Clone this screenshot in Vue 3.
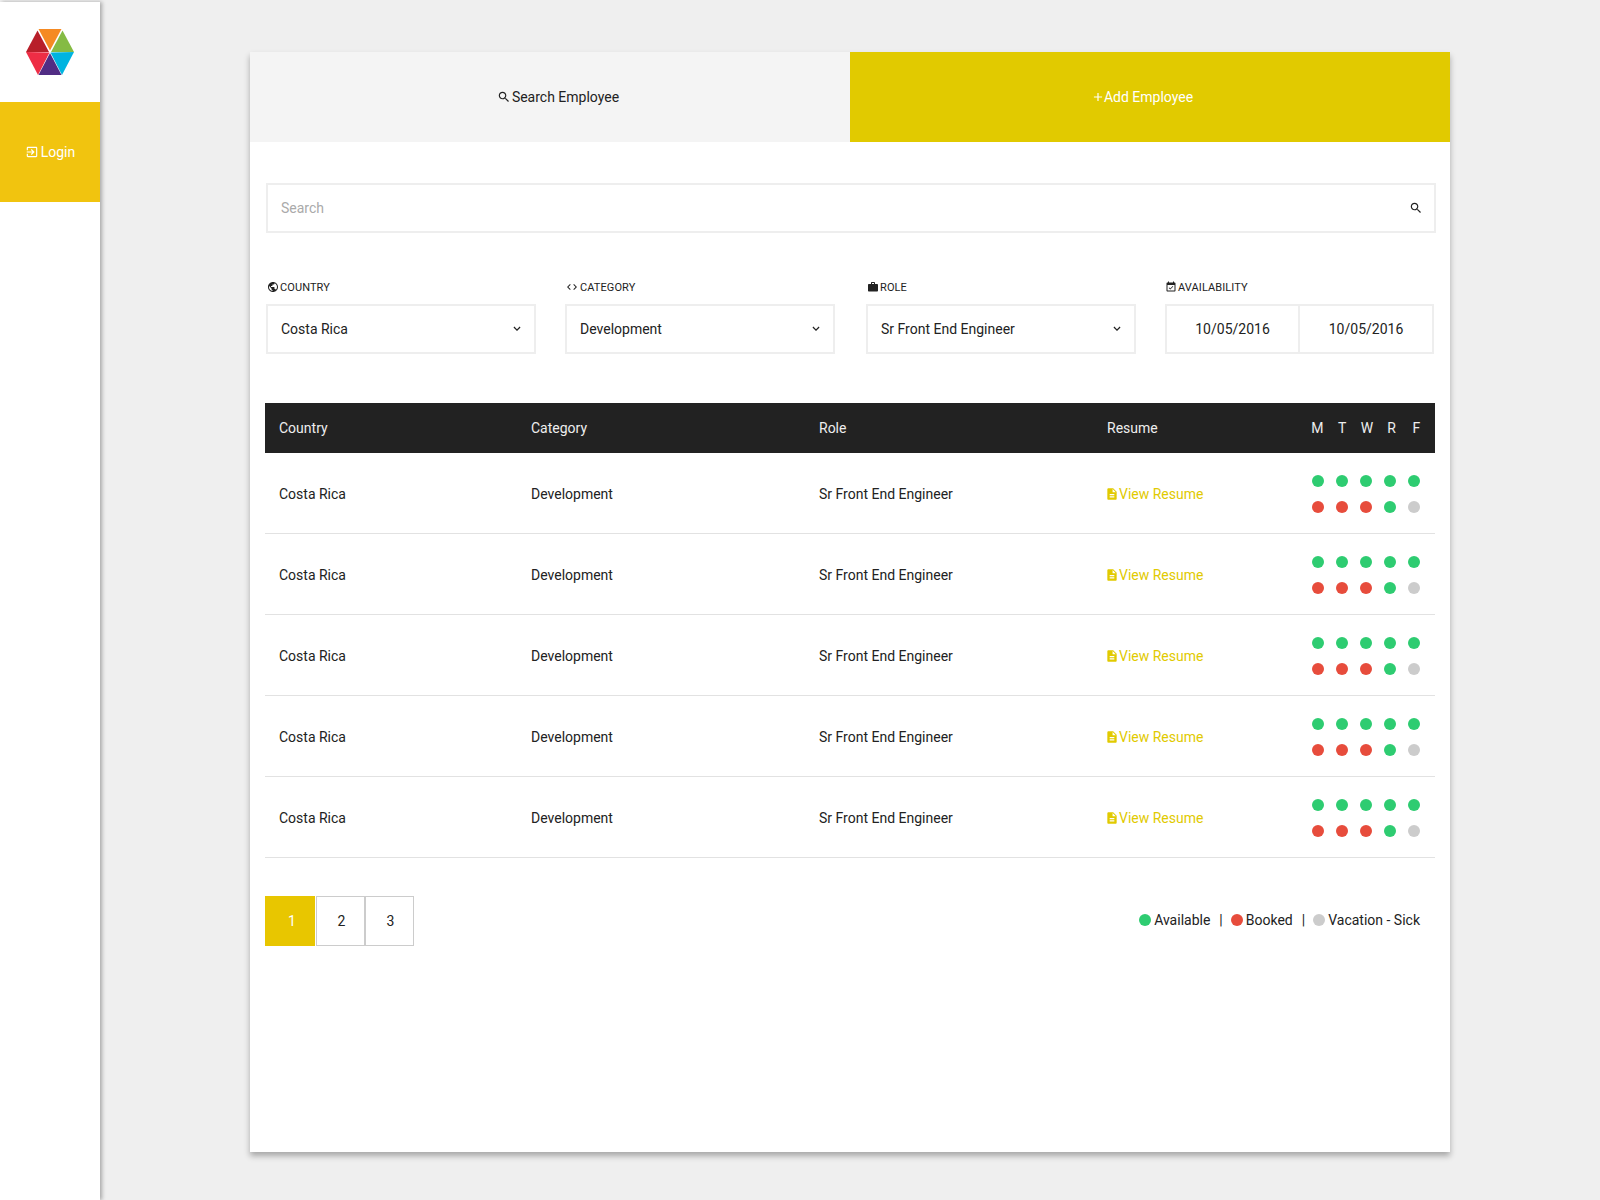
<script setup>
const paths = {
  search: 'M15.5 14h-.79l-.28-.27C15.41 12.59 16 11.11 16 9.5 16 5.91 13.09 3 9.5 3S3 5.91 3 9.5 5.91 16 9.5 16c1.61 0 3.09-.59 4.23-1.57l.27.28v.79l5 4.99L20.49 19l-4.99-5zm-6 0C7.01 14 5 11.99 5 9.5S7.01 5 9.5 5 14 7.01 14 9.5 11.99 14 9.5 14z',
  public: 'M12 2C6.48 2 2 6.48 2 12s4.48 10 10 10 10-4.48 10-10S17.52 2 12 2zm-1 17.93c-3.95-.49-7-3.85-7-7.93 0-.62.08-1.21.21-1.79L9 15v1c0 1.1.9 2 2 2v1.93zm6.9-2.54c-.26-.81-1-1.39-1.9-1.39h-1v-3c0-.55-.45-1-1-1H8v-2h2c.55 0 1-.45 1-1V7h2c1.1 0 2-.9 2-2v-.41c2.93 1.19 5 4.06 5 7.41 0 2.08-.8 3.97-2.1 5.39z',
  code: 'M9.4 16.6L4.8 12l4.6-4.6L8 6l-6 6 6 6 1.4-1.4zm5.2 0l4.6-4.6-4.6-4.6L16 6l6 6-6 6-1.4-1.4z',
  work: 'M20 6h-4V4c0-1.11-.89-2-2-2h-4c-1.11 0-2 .89-2 2v2H4c-1.11 0-1.99.89-1.99 2L2 19c0 1.11.89 2 2 2h16c1.11 0 2-.89 2-2V8c0-1.11-.89-2-2-2zm-6 0h-4V4h4v2z',
  event: 'M16.53 11.06L15.47 10l-4.88 4.88-2.12-2.12-1.06 1.06L10.59 17l5.94-5.94zM19 3h-1V1h-2v2H8V1H6v2H5c-1.11 0-1.99.9-1.99 2L3 19c0 1.1.89 2 2 2h14c1.1 0 2-.9 2-2V5c0-1.1-.9-2-2-2zm0 16H5V8h14v11z',
  down: 'M7.41 7.84L12 12.42l4.59-4.58L18 9.25l-6 6-6-6z',
  doc: 'M14 2H6c-1.1 0-1.99.9-1.99 2L4 20c0 1.1.89 2 1.99 2H18c1.1 0 2-.9 2-2V8l-6-6zm2 16H8v-2h8v2zm0-4H8v-2h8v2zm-3-5V3.5L18.5 9H13z',
  login: 'M10.09 15.59L11.5 17l5-5-5-5-1.41 1.41L12.67 11H3v2h9.67l-2.58 2.59zM19 3H5c-1.11 0-2 .9-2 2v4h2V5h14v14H5v-4H3v4c0 1.1.89 2 2 2h14c1.1 0 2-.9 2-2V5c0-1.1-.9-2-2-2z',
  add: 'M19 13h-6v6h-2v-6H5v-2h6V5h2v6h6v2z'
}
const selects = [
  { label: 'Country', icon: paths.public, value: 'Costa Rica' },
  { label: 'Category', icon: paths.code, value: 'Development' },
  { label: 'Role', icon: paths.work, value: 'Sr Front End Engineer' }
]
const days = ['M', 'T', 'W', 'R', 'F']
const rows = [1, 2, 3, 4, 5]
const dots = ['g', 'g', 'g', 'g', 'g', 'r', 'r', 'r', 'g', 'n']
</script>

<template>
  <div class="page">
    <aside class="sidebar">
      <div class="logo">
        <svg width="48" height="46" viewBox="0 0 48 46">
          <polygon points="12.5,0 35.5,0 24,21.5" fill="#f58a23" />
          <polygon points="36.5,1.5 48,23 25,23" fill="#85bb44" />
          <polygon points="48,23 36,46 24.5,23.5" fill="#00b4e0" />
          <polygon points="24,24 35.5,46 12.5,46" fill="#512d84" />
          <polygon points="0,23 23.5,23.5 12,46" fill="#ee2d45" />
          <polygon points="11.5,1.5 23,23 0,23" fill="#b81f2a" />
        </svg>
      </div>
      <a class="login"><svg class="ico" width="14" height="14" viewBox="0 0 24 24"><path :d="paths.login" /></svg>Login</a>
    </aside>
    <main class="card">
      <div class="tabs">
        <div class="tab tab-search"><svg class="ico" width="14" height="14" viewBox="0 0 24 24"><path :d="paths.search" /></svg>Search Employee</div>
        <div class="tab tab-add"><svg class="ico plus" width="14" height="14" viewBox="0 0 24 24"><path :d="paths.add" /></svg>Add Employee</div>
      </div>
      <div class="body">
        <div class="searchbox">
          <input class="searchinput" placeholder="Search" />
          <svg class="ico" width="14" height="14" viewBox="0 0 24 24"><path :d="paths.search" /></svg>
        </div>
        <div class="filters">
          <div v-for="s in selects" :key="s.label" class="filter">
            <div class="label"><svg class="ico" width="12" height="12" viewBox="0 0 24 24"><path :d="s.icon" /></svg>{{ s.label }}</div>
            <div class="select">
              <span>{{ s.value }}</span>
              <svg class="ico" width="14" height="14" viewBox="0 0 24 24"><path :d="paths.down" /></svg>
            </div>
          </div>
          <div class="filter filter-dates">
            <div class="label"><svg class="ico" width="12" height="12" viewBox="0 0 24 24"><path :d="paths.event" /></svg>Availability</div>
            <div class="dates">
              <div class="date date-first">10/05/2016</div>
              <div class="date date-second">10/05/2016</div>
            </div>
          </div>
        </div>
        <div class="table">
          <div class="row head">
            <div>Country</div>
            <div>Category</div>
            <div>Role</div>
            <div>Resume</div>
            <div class="days"><span v-for="d in days" :key="d">{{ d }}</span></div>
          </div>
          <div v-for="r in rows" :key="r" class="row item">
            <div>Costa Rica</div>
            <div>Development</div>
            <div>Sr Front End Engineer</div>
            <a class="resume"><svg class="ico" width="14" height="14" viewBox="0 0 24 24"><path :d="paths.doc" /></svg>View Resume</a>
            <div class="dots"><i v-for="(d, i) in dots" :key="i" class="dot" :class="d"></i></div>
          </div>
        </div>
        <div class="foot">
          <div class="pages">
            <div class="pg active">1</div>
            <div class="pg">2</div>
            <div class="pg">3</div>
          </div>
          <div class="legend">
            <i class="dot g"></i><span>Available</span><span class="sep">|</span>
            <i class="dot r"></i><span>Booked</span><span class="sep">|</span>
            <i class="dot n"></i><span>Vacation - Sick</span>
          </div>
        </div>
      </div>
    </main>
  </div>
</template>

<style>
html, body { margin: 0; background: #efefef; }
</style>

<style scoped>
.page {
  display: flex;
  height: 1200px;
  overflow: hidden;
  background: #efefef;
  font-family: Roboto, "Liberation Sans", sans-serif;
  font-size: 14px;
  color: #222;
}
.ico { fill: currentColor; flex: none; display: block; }
.sidebar {
  width: 100px;
  margin-top: 2px;
  background: #fff;
  box-shadow: 2px 0 4px rgba(0, 0, 0, .3);
  flex: none;
}
.logo { height: 100px; display: flex; align-items: center; justify-content: center; }
.login {
  height: 100px;
  background: #f1c40f;
  color: #fff;
  display: flex;
  align-items: center;
  justify-content: center;
  gap: 2px;
}
.card {
  width: 1200px;
  height: 1100px;
  margin: 52px 0 0 150px;
  background: #fff;
  box-shadow: 0 4px 6px rgba(0, 0, 0, .3);
}
.tabs { display: flex; height: 90px; }
.tab {
  flex: 0 0 50%;
  box-sizing: border-box;
  display: flex;
  align-items: center;
  justify-content: center;
  gap: 1px;
}
.tab-search { background: #f4f4f4; padding-left: 16px; }
.tab-add { background: #e1ca00; color: #fff; padding-right: 16px; }
.plus { margin-right: -2px; }
.body { padding: 41px 15px 0; }
.searchbox {
  box-sizing: border-box;
  width: 1170px;
  height: 50px;
  margin-left: 1px;
  border: 2px solid #eee;
  display: flex;
  align-items: center;
  padding: 0 11px 0 13px;
}
.searchinput {
  flex: 1;
  border: 0;
  outline: 0;
  padding: 0;
  font: inherit;
  color: #222;
  background: transparent;
}
.searchinput::placeholder { color: #aaa; opacity: 1; }
.filters {
  display: flex;
  gap: 30px;
  margin: 47px 0 0 1px;
}
.filter { width: 270px; flex: none; }
.filter:nth-child(2) { margin-left: -1px; margin-right: 1px; }
.filter:nth-child(2) .label { gap: 2px; }
.filter-dates { width: 269px; margin-left: -1px; }
.filter-dates .label { padding-left: 0; gap: 1px; }
.label {
  height: 24px;
  display: flex;
  align-items: center;
  gap: 1px;
  font-size: 11px;
  letter-spacing: .1px;
  text-transform: uppercase;
  padding-left: 1px;
  box-sizing: border-box;
  padding-bottom: 10px;
}
.select {
  box-sizing: border-box;
  height: 50px;
  border: 2px solid #eee;
  padding: 0 10px 0 13px;
  display: flex;
  align-items: center;
  justify-content: space-between;
}
.dates { display: flex; height: 50px; box-sizing: border-box; border: 2px solid #eee; }
.date { display: flex; align-items: center; justify-content: center; }
.date-first { width: 131px; flex: none; }
.date-second { flex: 1; border-left: 2px solid #eee; }
.table { margin-top: 49px; }
.row {
  display: grid;
  grid-template-columns: 252px 288px 288px 204px 1fr;
  padding: 0 14px;
  align-items: center;
}
.head { height: 50px; background: #222; color: #eee; }
.days { display: flex; margin-left: -6px; }
.days span { width: 24.75px; flex: none; text-align: center; }
.item { height: 81px; box-sizing: border-box; padding-top: 2px; border-bottom: 1px solid #e2e2e2; }
.resume { display: flex; align-items: center; color: #e1ca00; }
.resume .ico { margin-left: -2px; }
.dots {
  display: grid;
  grid-template-columns: repeat(5, 12px);
  column-gap: 12px;
  row-gap: 14px;
  margin-left: 1px;
}
.dot { display: block; width: 12px; height: 12px; border-radius: 50%; flex: none; }
.g { background: #2ecc71; }
.r { background: #e74c3c; }
.n { background: #ccc; }
.foot {
  display: flex;
  justify-content: space-between;
  align-items: center;
  margin-top: 38px;
  padding-right: 15px;
}
.pages { display: flex; }
.pg {
  box-sizing: border-box;
  width: 49px;
  height: 50px;
  padding-left: 2px;
  border: 1px solid #ccc;
  display: flex;
  align-items: center;
  justify-content: center;
}
.pg.active {
  width: 50px;
  margin-right: 1px;
  padding-left: 4px;
  background: #e8c600;
  border-color: #e8c600;
  color: #fff;
}
.legend { display: flex; align-items: center; margin-top: -2px; }
.legend .dot { margin-right: 3px; }
.sep { margin: 0 8px 0 9px; }
</style>
